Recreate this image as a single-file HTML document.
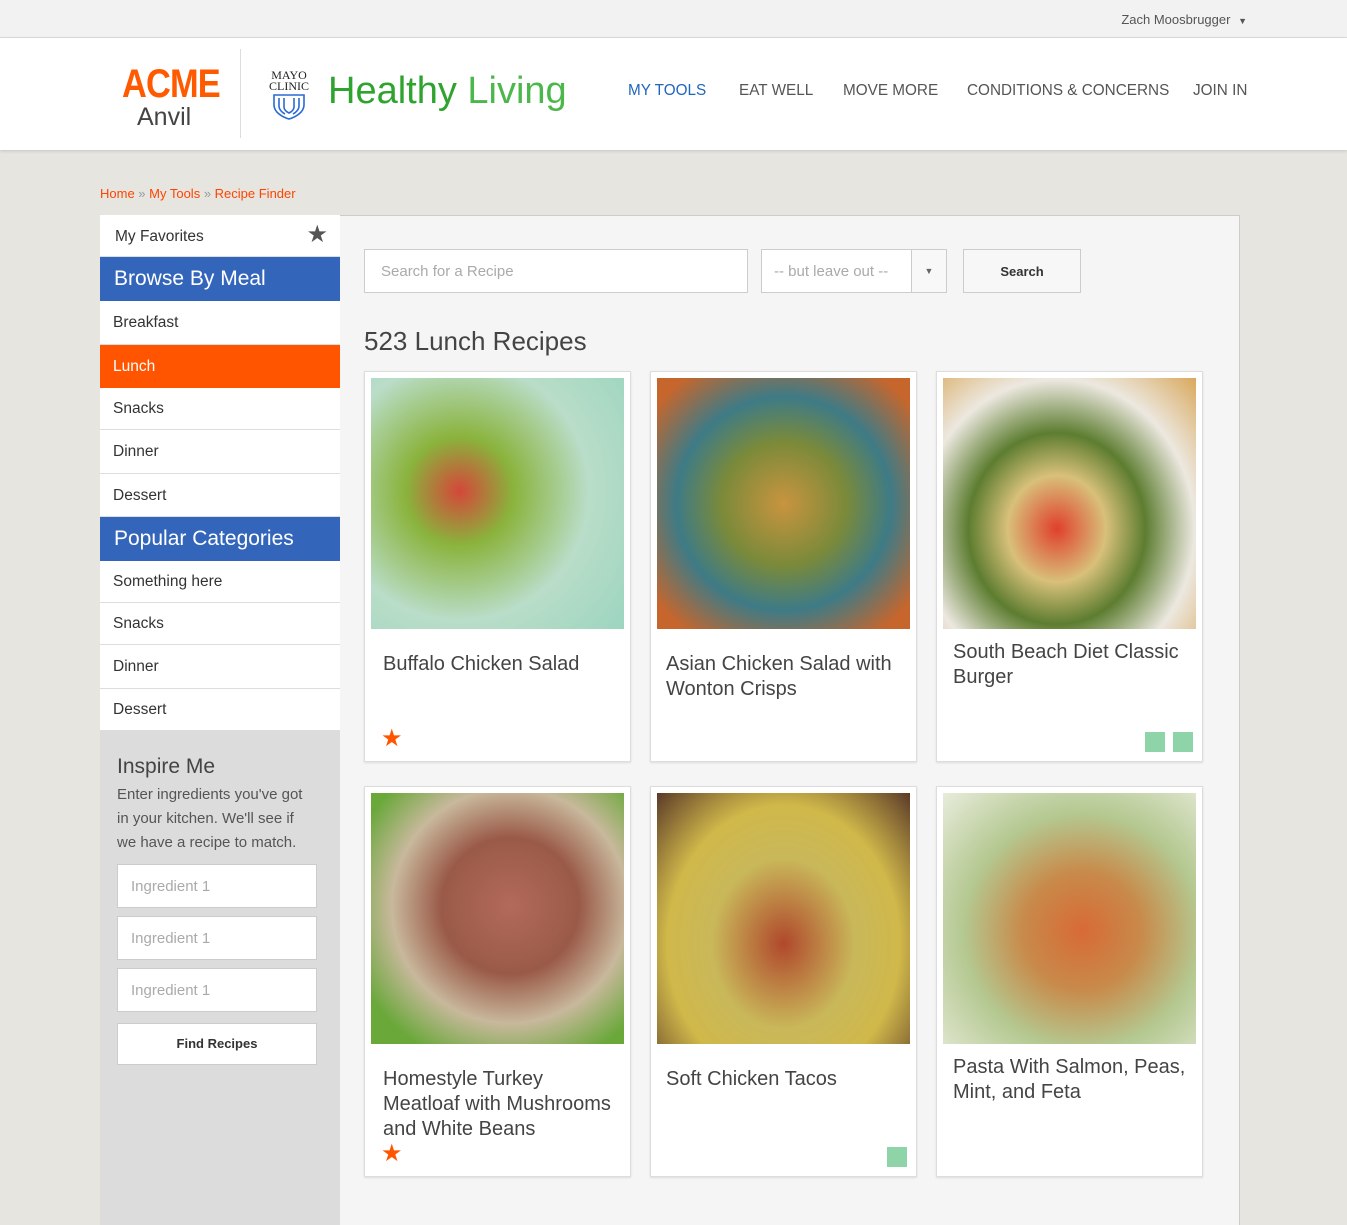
<!DOCTYPE html>
<html><head><meta charset="utf-8"><style>
*{box-sizing:border-box;margin:0;padding:0}
body{width:1347px;height:1225px;overflow:hidden;background:#e6e5e0;font-family:"Liberation Sans",sans-serif;color:#333;position:relative}
.abs{position:absolute}
.top{left:0;top:0;width:1347px;height:38px;background:#f2f2f2;border-bottom:1px solid #ddd}
.hdr{left:0;top:38px;width:1347px;height:112px;background:#fff;box-shadow:0 1px 3px rgba(0,0,0,.15)}
.nav{top:82px;font-size:15.3px;color:#555}
.side{left:100px;top:215px;width:240px;height:1010px;background:#dcdcdc}
.it{height:43px;line-height:43px;padding-left:13px;font-size:15.5px;background:#fff;border-bottom:1px solid #ddd;color:#333}
.blue{background:#3366bb;color:#fff;font-size:21px;padding-left:14px;border:none}
.main{left:340px;top:215px;width:900px;height:1010px;background:#f5f5f5;border-top:1px solid #ccc;border-right:1px solid #ccc}
.inp{background:#fff;border:1px solid #ccc;height:44px;color:#aaa;font-size:15px;line-height:44px;padding-left:16px}
.card{width:267px;height:391px;background:#fff;border:1px solid #ddd;box-shadow:0 1px 2px rgba(0,0,0,.1)}
.card .img{position:absolute;left:6px;top:6px;width:253px;height:251px}
.card .t{position:absolute;left:18px;top:280px;font-size:20px;line-height:25px;color:#444;width:240px}
.star{position:absolute;left:16px;bottom:8px;color:#ff5500;font-size:24px}
.sq{position:absolute;width:20px;height:20px;background:#8fd4a8;bottom:9px}
</style></head><body>
<div class="abs top"></div>
<div class="abs" style="right:100px;top:12px;font-size:13px;color:#555">Zach Moosbrugger <span style="font-size:9px;margin-left:4px">▼</span></div>
<div class="abs hdr"></div>
<div class="abs" style="left:122px;top:62px;font-size:40px;font-weight:bold;color:#ff5a00;letter-spacing:-1px;transform:scaleX(.86);transform-origin:left">ACME</div>
<div class="abs" style="left:137px;top:103px;font-size:25px;color:#444">Anvil</div>
<div class="abs" style="left:240px;top:49px;width:1px;height:89px;background:#ddd"></div>
<div class="abs" style="left:266px;top:70px;font-family:'Liberation Serif',serif;font-size:12px;line-height:11px;color:#222;text-align:center;width:46px">MAYO<br>CLINIC</div>
<svg class="abs" style="left:273px;top:94px" width="32" height="26" viewBox="0 0 32 26"><g fill="none" stroke="#2a6ad1" stroke-width="1.6"><path d="M1 1h30v10c0 7-8 12-15 14C9 23 1 18 1 11z"/><path d="M6 4v8c0 4 4 7 6 8M26 4v8c0 4-4 7-6 8M11 4v9c0 3 3 5 5 6 2-1 5-3 5-6V4"/></g></svg>
<div class="abs" style="left:328px;top:70px;font-size:38px;color:#2ea42e">Healthy <span style="color:#4cb84c">Living</span></div>
<div class="abs nav" style="left:628px;color:#2266bb">MY TOOLS</div>
<div class="abs nav" style="left:739px">EAT WELL</div>
<div class="abs nav" style="left:843px">MOVE MORE</div>
<div class="abs nav" style="left:967px">CONDITIONS &amp; CONCERNS</div>
<div class="abs nav" style="left:1193px">JOIN IN</div>
<div class="abs" style="left:100px;top:186px;font-size:13px;color:#ff4400">Home <span style="color:#999">»</span> My Tools <span style="color:#999">»</span> Recipe Finder</div>

<div class="abs side">
<div class="it" style="height:42px;line-height:44px;padding-left:15px">My Favorites<span style="float:right;margin-right:12px;font-size:24px;color:#555;line-height:40px">★</span></div>
<div class="it blue" style="height:44px;line-height:44px">Browse By Meal</div>
<div class="it" style="height:44px;line-height:44px">Breakfast</div>
<div class="it" style="background:#ff5500;color:#fff;border:none">Lunch</div>
<div class="it" style="height:42px;line-height:42px">Snacks</div>
<div class="it" style="height:44px;line-height:44px">Dinner</div>
<div class="it">Dessert</div>
<div class="it blue" style="height:44px;line-height:44px">Popular Categories</div>
<div class="it" style="height:42px;line-height:42px">Something here</div>
<div class="it" style="height:42px;line-height:42px">Snacks</div>
<div class="it" style="height:44px;line-height:44px">Dinner</div>
<div class="it" style="height:42px;line-height:42px">Dessert</div>
<div style="padding:24px 17px 0">
<div style="font-size:21px;color:#444">Inspire Me</div>
<div style="font-size:15px;line-height:24px;color:#555;margin-top:4px;width:196px">Enter ingredients you've got in your kitchen. We'll see if we have a recipe to match.</div>
<div class="inp" style="margin-top:9px;width:200px;padding-left:13px">Ingredient 1</div>
<div class="inp" style="margin-top:8px;width:200px;padding-left:13px">Ingredient 1</div>
<div class="inp" style="margin-top:8px;width:200px;padding-left:13px">Ingredient 1</div>
<div style="margin-top:11px;width:200px;height:42px;background:#fff;border:1px solid #ccc;text-align:center;line-height:40px;font-size:13px;font-weight:bold;color:#333">Find Recipes</div>
</div>
</div>

<div class="abs main"></div>
<div class="abs inp" style="left:364px;top:249px;width:384px">Search for a Recipe</div>
<div class="abs inp" style="left:761px;top:249px;width:186px;padding-left:12px">-- but leave out --</div>
<div class="abs" style="left:911px;top:250px;width:35px;height:42px;border-left:1px solid #ccc;background:#f8f8f8;text-align:center;line-height:42px;font-size:9px;color:#666">▼</div>
<div class="abs" style="left:963px;top:249px;width:118px;height:44px;border:1px solid #ccc;background:#f7f7f7;text-align:center;line-height:44px;font-size:13px;font-weight:bold;color:#333">Search</div>
<div class="abs" style="left:364px;top:326px;font-size:26px;color:#444">523 Lunch Recipes</div>

<div class="abs card" style="left:364px;top:371px"><div class="img" style="background:radial-gradient(circle at 35% 45%,#d4473a 0,#8ab33c 25%,#b9ddc8 60%,#9cd5c0 100%)"></div><div class="t">Buffalo Chicken Salad</div><div class="star">★</div></div>
<div class="abs card" style="left:650px;top:371px"><div class="img" style="background:radial-gradient(ellipse at 50% 50%,#c9943f 0,#7a8a3a 35%,#3e7b86 60%,#c7662c 90%)"></div><div class="t" style="left:15px">Asian Chicken Salad with Wonton Crisps</div></div>
<div class="abs card" style="left:936px;top:371px"><div class="img" style="background:radial-gradient(ellipse at 45% 60%,#e0402c 0,#d8c07a 25%,#5d7d30 45%,#ece8e0 70%,#d9a85c 100%)"></div><div class="t" style="top:268px;left:16px">South Beach Diet Classic Burger</div><div class="sq" style="left:208px"></div><div class="sq" style="left:236px"></div></div>

<div class="abs card" style="left:364px;top:786px"><div class="img" style="background:radial-gradient(ellipse at 55% 45%,#b36a5a 0,#9a5a48 35%,#c8b89c 60%,#6aa83a 85%)"></div><div class="t" style="top:280px">Homestyle Turkey Meatloaf with Mushrooms and White Beans</div><div class="star">★</div></div>
<div class="abs card" style="left:650px;top:786px"><div class="img" style="background:radial-gradient(ellipse at 50% 60%,#b0482c 0,#c9b85a 40%,#d0b84a 65%,#5a3a28 100%)"></div><div class="t" style="top:280px;left:15px">Soft Chicken Tacos</div><div class="sq" style="left:236px"></div></div>
<div class="abs card" style="left:936px;top:786px"><div class="img" style="background:radial-gradient(ellipse at 55% 55%,#d86a36 0,#c88a4a 30%,#b4c890 60%,#e8ecdc 100%)"></div><div class="t" style="top:268px;left:16px">Pasta With Salmon, Peas, Mint, and Feta</div></div>
</body></html>
